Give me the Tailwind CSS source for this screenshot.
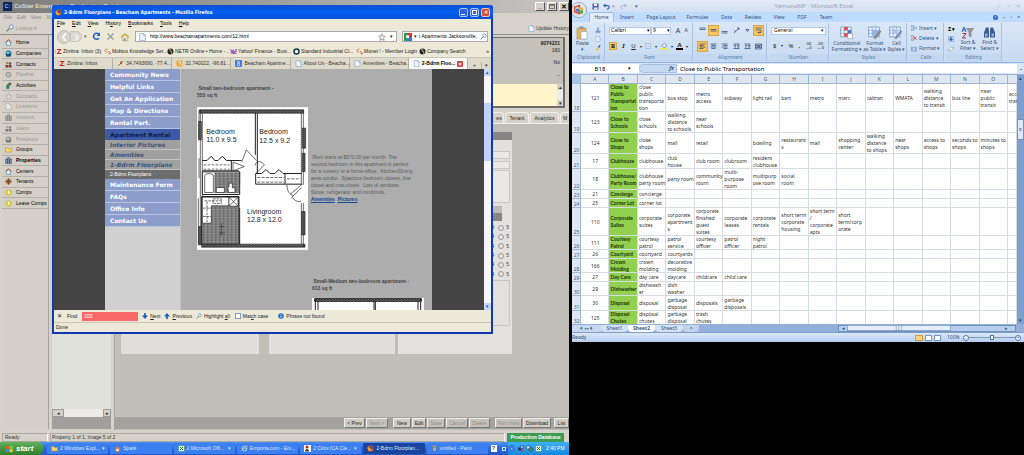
<!DOCTYPE html>
<html lang="en">
<head>
  <meta charset="UTF-8">
  <title>Desktop</title>
  <meta name="viewport" content="width=device-width, initial-scale=1.0">
  <script src="https://cdn.jsdelivr.net/npm/@tailwindcss/browser@4"></script>
</head>
<body class="bg-black font-['Liberation_Sans',sans-serif] text-[5px] leading-[7px] text-[#222]">

<!-- shared icons -->
<svg class="hidden">
  <symbol id="page" viewBox="0 0 12 14"><path d="M1 1h7l3 3v9H1z" fill="#eef5ff" stroke="#6f92c8"/><path d="M8 1v3h3" fill="none" stroke="#6f92c8"/></symbol>
  <symbol id="fox" viewBox="0 0 14 14"><circle cx="7" cy="7" r="6" fill="#e2631b"/><circle cx="8" cy="6" r="3.4" fill="#2b4f9e"/><path d="M1 5c2-1 3 0 4 1s3 1 4 3-4 4-6 2z" fill="#f7a52b"/></symbol>
  <symbol id="z" viewBox="0 0 14 14"><path d="M1 3v8" stroke="#bbb" stroke-width="2"/><path d="M4 2h9L7 10h6v2H3l6-8H4z" fill="#d8201c"/></symbol>
  <symbol id="swirl" viewBox="0 0 14 14"><path d="M7 3a3 3 0 1 0-1 5M8 6l5 6M9 11a2 2 0 1 0 4-2" fill="none" stroke="#e0562b" stroke-width="1.6"/></symbol>
  <symbol id="globe" viewBox="0 0 14 14"><circle cx="7" cy="7" r="6" fill="#222"/><path d="M4 3l4 1-1 3 3 1-1 4" stroke="#cfd68a" stroke-width="1.5" fill="none"/></symbol>
  <symbol id="tenant" viewBox="0 0 14 14"><circle cx="7" cy="7" r="6" fill="#d8892f"/><path d="M7 1v12M1 7h12" stroke="#5a2a1a" stroke-width="1.5"/><circle cx="7" cy="7" r="3" fill="#3a5aa0"/></symbol>
  <symbol id="yahoo" viewBox="0 0 14 14"><path d="M1 3l3 4v5M7 3L4 7" stroke="#7a1aa0" stroke-width="2" fill="none"/><circle cx="8" cy="9" r="2" fill="none" stroke="#7a1aa0" stroke-width="2"/><path d="M12 2v6M12 10v2" stroke="#7a1aa0" stroke-width="2"/></symbol>
  <symbol id="ring" viewBox="0 0 14 14"><circle cx="7" cy="7" r="5" fill="#fff" stroke="#16364a" stroke-width="3"/></symbol>
  <symbol id="map" viewBox="0 0 14 14"><path d="M1 1h12v12H1z" fill="#e6e0c4"/><path d="M2 12L12 2" stroke="#4a9a4a" stroke-width="2"/><path d="M8 2l3 3-3 5-2-5z" fill="#d33"/></symbol>
  <symbol id="orange" viewBox="0 0 14 14"><rect x="1" y="1" width="12" height="12" rx="2" fill="#f0a52c"/><path d="M4 4h5v5h2" fill="none" stroke="#fff" stroke-width="1.6"/></symbol>
  <symbol id="g8" viewBox="0 0 14 14"><rect width="14" height="14" rx="2" fill="#3b78e0"/><circle cx="7" cy="4.5" r="2" fill="none" stroke="#fff" stroke-width="1.5"/><circle cx="7" cy="9.5" r="2.5" fill="none" stroke="#fff" stroke-width="1.5"/></symbol>
  <symbol id="xl" viewBox="0 0 14 14"><rect x="1" y="1" width="12" height="12" rx="1" fill="#e4f3e4" stroke="#2b8a3e"/><path d="M4 4l6 6M10 4l-6 6" stroke="#1e7a33" stroke-width="2"/></symbol>
  <symbol id="folder" viewBox="0 0 14 14"><path d="M1 3h5l1 2h6v7H1z" fill="#f6d56a" stroke="#b98a20"/></symbol>
  <symbol id="flame" viewBox="0 0 14 14"><path d="M7 1c1 3 5 4 5 8a5 5 0 0 1-10 0c0-3 4-4 5-8z" fill="#e8742a"/><circle cx="7" cy="10" r="2.5" fill="#fff"/></symbol>
  <symbol id="ie" viewBox="0 0 14 14"><circle cx="7" cy="7" r="4.5" fill="none" stroke="#8fd4ff" stroke-width="2.4"/><path d="M3 7h8M1 12C3 6 8 2 13 2" stroke="#f3d45a" fill="none"/></symbol>
  <symbol id="citrix" viewBox="0 0 14 14"><rect width="14" height="14" fill="#fff"/><circle cx="6" cy="4" r="3" fill="#c22"/><path d="M2 13c0-7 8-7 8 0z" fill="#333"/></symbol>
  <symbol id="paint" viewBox="0 0 14 14"><path d="M3 5h8l-1 8H4z" fill="#9fb7c8" stroke="#456"/><path d="M5 5L4 1M7 5V1M9 5l2-4" stroke="#e2b23a" stroke-width="1.5"/></symbol>
  <symbol id="info" viewBox="0 0 14 14"><circle cx="7" cy="7" r="6.5" fill="#1d6fc4"/><path d="M7 3v2M7 6v5" stroke="#fff" stroke-width="2"/></symbol>
  <symbol id="lens" viewBox="0 0 14 14"><circle cx="9" cy="5" r="3.5" fill="#e6f1fb" stroke="#5b87b5" stroke-width="1.4"/><path d="M6 8l-5 5" stroke="#777" stroke-width="2"/></symbol>
  <symbol id="people" viewBox="0 0 14 14"><circle cx="4.500" cy="4" r="2.500" fill="#c4803a"/><circle cx="10" cy="5" r="2.500" fill="#3c5a9c"/><path d="M1 13V8h6v5zM8 13V8h5v5z" fill="#7a3a2a"/></symbol>
  <symbol id="house" viewBox="0 0 14 14"><path d="M1 7l6-6 6 6" fill="none" stroke="#c4622a" stroke-width="2"/><path d="M3 7v6h8V7L7 3z" fill="#dbe9f5" stroke="#2b6f98"/></symbol>
  <symbol id="ball" viewBox="0 0 14 14"><circle cx="7" cy="7" r="6" fill="#2c83a8"/><path d="M2 8h10v5H2z" fill="#1c5370"/><path d="M4 4h4v3H4z" fill="#a8dcec"/></symbol>
  <symbol id="gear" viewBox="0 0 14 14"><circle cx="7" cy="7" r="4.500" fill="#ddd" stroke="#777" stroke-width="2.500"/><circle cx="7" cy="7" r="1.500" fill="#777"/></symbol>
  <symbol id="arrowup" viewBox="0 0 14 14"><path d="M3 13V7l7-6 3 3-5 4v5z" fill="#2f8a66" stroke="#365"/><circle cx="10" cy="4" r="2" fill="#c33"/></symbol>
  <symbol id="star" viewBox="0 0 14 14"><path d="M7 1l2 4 4 .5-3 3 .8 4.500L7 11l-3.800 2L4 8.500l-3-3L5 5z" fill="#e4e4e4" stroke="#777"/></symbol>
  <symbol id="bld" viewBox="0 0 14 14"><path d="M1 4h4v9H1zM5 1h4v12H5zM9 4h4v9H9z" fill="#7e93a8" stroke="#3c4c60"/></symbol>
  <symbol id="coin" viewBox="0 0 14 14"><circle cx="7" cy="7" r="5.500" fill="#e8d83a" stroke="#b9a51c"/><path d="M7 3v5h3" stroke="#fff" stroke-width="2" fill="none"/></symbol>
  <symbol id="office" viewBox="0 0 40 40"><circle cx="20" cy="20" r="19" fill="#dfe7f1" stroke="#8d9db5" stroke-width="2"/><path d="M9 13l12-4v20l-12-4z" fill="none" stroke="#e0502a" stroke-width="4"/><path d="M20 14h10v6H20z" fill="#f3b52a"/><path d="M20 21h10v8H20z" fill="#5aa53c"/><path d="M12 17h8v7h-8z" fill="#3f7ad0"/></symbol>
  <symbol id="grid" viewBox="0 0 40 40"><path d="M2 3h30v28H2z" fill="#f6faff" stroke="#5d7fae" stroke-width="2"/><path d="M2 12h30M2 21h30M12 3v28M22 3v28" stroke="#7c9cc9" stroke-width="2"/></symbol>
</svg>

<main class="grid min-h-screen grid-cols-[569fr_452fr] gap-[3px]">

  <!-- left monitor -->
  <div class="relative flex min-w-0 flex-col overflow-hidden bg-[#d6d2ca]">
    <header class="flex h-[13px] items-center gap-[2px] bg-linear-to-r from-[#7d7d7d] to-[#c6c5c3] pl-[3px] text-[6px] font-bold text-[#dedad2]">
      <span class="flex h-[9px] w-[9px] items-center justify-center bg-[#10245c] text-[5px] text-[#7fb6ff]">C:</span>
      <h1 class="flex-1">CoStar Enterprise - Production Database</h1>
      <button class="h-[9px] w-[10px] border border-[#fff] border-r-[#555] border-b-[#555] bg-[#d6d2ca] leading-[5px] text-black" aria-label="Minimize">_</button>
      <button class="flex h-[9px] w-[10px] items-center justify-center border border-[#fff] border-r-[#555] border-b-[#555] bg-[#d6d2ca]" aria-label="Maximize"><span class="h-[5px] w-[6px] border border-t-2 border-[#777]"></span></button>
      <button class="h-[9px] w-[10px] border border-[#fff] border-r-[#555] border-b-[#555] bg-[#d6d2ca] text-[7px] leading-[6px] text-black" aria-label="Close">✕</button>
    </header>
    <nav class="flex h-[9px] items-center gap-[5px] pl-1 text-[#8f8c86]"><span>File</span><span>Edit</span><span>View</span><span>Modules</span></nav>
    <div class="flex h-[13px] items-center justify-between border-b border-[#8f8c86] pl-[6px] text-[#9a978f]">
      <button class="flex items-center gap-[2px]"><svg class="size-2"><use href="#lens"/></svg>Lookup ▾</button>
      <button class="flex items-center gap-px text-[#333]"><svg class="size-[7px]"><use href="#page"/></svg>Update History</button>
    </div>

    <div class="flex flex-1">
      <ul id="modules" class="mb-px ml-[2px] w-[47px] shrink-0 border-r border-[#a9a59d] bg-[#d4d0c8] pt-[3px]"></ul>
      <div class="ml-[3px] flex min-w-0 flex-1 flex-col">
        <div class="mt-[2px] mr-[4px] flex h-[71px] flex-col border-r-2 border-b-2 border-t border-[#6f6d69] bg-[#c4c1ba] text-right">
          <div class="flex-1 pt-[2px] pr-[3px]">
            <p class="font-bold">9074221</p>
            <p>160</p>
            <p class="mt-[5px]">No</p>
            <p class="mt-[6px]">--</p>
          </div>
          <div class="flex h-[22px] justify-end bg-[#fff6cc]">
            <div class="flex w-[6px] flex-col justify-between bg-[#eee] text-center leading-[6px]"><span class="bg-[#d4d0c8]">▴</span><span class="bg-[#d4d0c8]">▾</span></div>
          </div>
        </div>
        <div class="mt-[4px] flex h-[12px] justify-end gap-px overflow-hidden border-b border-[#efede9] text-[#222]">
          <button class="w-[20px] rounded-t border border-b-0 border-[#f3f1ed] pl-[10px]">es</button>
          <button class="w-[24px] rounded-t border border-b-0 border-[#f3f1ed]">Tenant</button>
          <button class="w-[29px] rounded-t border border-b-0 border-[#f3f1ed]">Analytics</button>
          <button class="w-[9px] rounded-tl border border-r-0 border-b-0 border-[#f3f1ed]">M</button>
        </div>
        <div class="flex flex-1">
          <div class="flex w-[59px] flex-col">
            <div class="flex-1 bg-[#e1e1dc]"></div>
            <div class="flex h-[8px] justify-between bg-[#ecebe8]"><button class="w-[12px] border border-[#999] bg-[#d4d0c8] leading-[6px]">◂</button><button class="w-[8px] border border-[#999] bg-[#d4d0c8] leading-[6px]">▸</button></div>
            <div class="mb-px h-[12px] bg-[#a09f9b]"></div>
          </div>
          <div class="ml-[3px] flex flex-1 flex-col border-l border-[#a5a29b] bg-[#c1beb7]">
            <div class="mt-2 mr-[57px] ml-[6px] flex h-[222px]">
              <div class="mr-[10px] flex-[138] bg-[#e0dfdc]"></div>
              <div class="mr-[3px] flex-[125] bg-[#e0dfdc]"></div>
              <form class="flex flex-[114] flex-col bg-[#e3e1de]">
                <div class="mb-[11px] h-[8px] bg-[#868686]"></div>
                <input aria-label="Contact" class="mx-[2px] mb-[2px] h-[8px] border border-[#c9c7c4] bg-[#e9e8e6]">
                <input aria-label="Phone" class="mx-[2px] mb-px h-[8px] border border-[#c9c7c4] bg-[#e9e8e6]">
                <textarea aria-label="Notes" class="mx-[2px] h-[33px] resize-none border border-[#c9c7c4] bg-[#e9e8e6]"></textarea>
                <div class="mt-[3px] mr-[10px] h-[7px] bg-[#bdbcba]"></div>
                <div class="mr-[10px] mb-[2px] h-[8px] bg-[#868686]"></div>
                <div id="ratings" class="flex h-[56px] flex-col justify-around pr-[3px] text-[#444]"></div>
                <textarea aria-label="Remarks" class="mx-[2px] mt-px h-[46px] resize-none border border-[#c9c7c4] bg-[#e3e1de]"></textarea>
              </form>
            </div>
            <div class="flex-1"></div>
            <div class="mb-px flex h-[12px] items-center justify-end gap-px bg-[#a3a29e] text-[#222]">
              <button class="h-[10px] w-[21px] border border-[#efede9] border-r-[#777] border-b-[#777] bg-[#d0cdc6]">&lt; Prev</button>
              <button class="mr-[4px] h-[10px] w-[22px] border border-[#efede9] border-r-[#777] border-b-[#777] bg-[#c4c1ba] text-[#8d8a84]">Next &gt;</button>
              <button class="h-[10px] w-[18px] border border-[#efede9] border-r-[#777] border-b-[#777] bg-[#d0cdc6]">New</button>
              <button class="h-[10px] w-[14px] border border-[#efede9] border-r-[#777] border-b-[#777] bg-[#d0cdc6]">Edit</button>
              <button class="h-[10px] w-[18px] border border-[#efede9] border-r-[#777] border-b-[#777] bg-[#c4c1ba] text-[#8d8a84]">Save</button>
              <button class="h-[10px] w-[22px] border border-[#efede9] border-r-[#777] border-b-[#777] bg-[#c4c1ba] text-[#8d8a84]">Cancel</button>
              <button class="mr-[4px] h-[10px] w-[21px] border border-[#efede9] border-r-[#777] border-b-[#777] bg-[#c4c1ba] text-[#8d8a84]">Delete</button>
              <button class="h-[10px] w-[27px] border border-[#efede9] border-r-[#777] border-b-[#777] bg-[#c4c1ba] text-[#8d8a84]">Film View</button>
              <button class="mr-[2px] h-[10px] w-[28px] border border-[#efede9] border-r-[#777] border-b-[#777] bg-[#d0cdc6]">Download</button>
              <button class="h-[10px] w-[15px] border border-[#efede9] border-r-[#777] border-b-[#777] bg-[#d0cdc6]">List</button>
            </div>
          </div>
        </div>
      </div>
    </div>

    <footer class="flex h-[12px] items-center gap-[2px] pt-[3px] pr-[5px] pl-[2px] text-[#333]">
      <span class="h-[9px] w-[46px] border border-[#aaa69e] border-r-white pl-[2px]">Ready</span>
      <span class="h-[9px] flex-1 border border-[#aaa69e] border-r-white pl-px">Property 1 of 1, Image 5 of 2</span>
      <span class="h-[9px] w-[57px] bg-[#3e9b52] text-center font-bold leading-[9px] text-white">Production Database</span>
    </footer>

    <!-- taskbar -->
    <nav class="flex h-[13px] items-center bg-linear-to-b from-[#4f93f5] via-[#2a66dd] to-[#2258c8] text-[#dfeaff]">
      <button class="mr-[4px] flex h-full w-[43px] items-center gap-[2px] rounded-r-[5px] bg-linear-to-b from-[#5fb35a] to-[#2f7d2e] pl-[5px] text-[8px] font-bold italic text-white">
        <svg class="h-2 w-[9px]" viewBox="0 0 18 16"><path d="M1 3l7-2v6l-7 1z" fill="#e8562a"/><path d="M9 1l8 1-1 6-7-1z" fill="#7cc63a"/><path d="M1 9l7-1-1 6-6 1z" fill="#4a86e8"/><path d="M9 8l7 1-1 6-6-1z" fill="#f3c32e"/></svg>start
      </button>
      <div id="tasks" class="flex min-w-0 flex-1 gap-[2px]"></div>
      <div class="flex h-full w-[20px] items-center justify-center gap-[5px]"><span class="h-[7px] w-[6px] bg-white text-center font-bold text-[#222]">?</span><span class="h-[4px] w-[4px] border border-[#cfe2ff]"></span></div>
      <div class="flex h-full w-[61px] items-center gap-[2px] bg-linear-to-b from-[#3cb0f5] to-[#1488dd] text-white">
        <span class="flex size-[7px] items-center justify-center rounded-full bg-[#3b78d8] leading-[5px]">‹</span>
        <svg class="size-[7px]" viewBox="0 0 14 14"><path d="M2 5h7v6H2z" fill="#223a7a"/><path d="M7 1h6v6H7z" fill="#8fb5ee" stroke="#223a7a"/><path d="M8 9h4v4H8z" fill="#d33"/></svg>
        <svg class="size-[7px]" viewBox="0 0 14 14"><path d="M1 2h7v6H1z" fill="#d5e6ff" stroke="#234"/><path d="M6 6h7v6H6z" fill="#3aa45a" stroke="#234"/></svg>
        <svg class="size-[7px]"><use href="#xl"/></svg>
        <time class="ml-[2px]">2:40 PM</time>
      </div>
    </nav>

    <!-- browser window -->
    <section class="absolute top-[5px] right-[76px] left-[52px] flex flex-col rounded-t-[3px] border-2 border-t-0 border-[#1238b0] bg-[#ece9d8]">
      <header class="-mx-[2px] flex h-[14px] items-center gap-[2px] rounded-t-[3px] bg-linear-to-b from-[#0a50d8] via-[#0560f0] to-[#0450dc] pr-[3px] pl-[3px] text-white">
        <svg class="size-[7px]"><use href="#fox"/></svg>
        <h2 class="flex-1 font-['DejaVu_Sans_Condensed','DejaVu_Sans',sans-serif] text-[5px] font-bold">2-Bdrm Floorplans - Beacham Apartments - Mozilla Firefox</h2>
        <button aria-label="Minimize" class="flex size-[9px] items-end rounded-[2px] border border-[#a9c4f7] bg-[#2d64dd] p-px"><span class="h-px w-[4px] bg-white"></span></button>
        <button aria-label="Maximize" class="size-[9px] rounded-[2px] border border-[#a9c4f7] bg-[#2d64dd] p-px"><span class="block h-[5px] w-[5px] border border-white"></span></button>
        <button aria-label="Close" class="size-[9px] rounded-[2px] border border-[#f2c0b0] bg-[#d9502e] font-bold leading-[6px]">✕</button>
      </header>
      <nav class="flex h-[9px] items-center gap-[7px] pl-[3px] text-black">
        <span><u>F</u>ile</span><span><u>E</u>dit</span><span><u>V</u>iew</span><span>Hi<u>s</u>tory</span><span><u>B</u>ookmarks</span><span><u>T</u>ools</span><span><u>H</u>elp</span>
      </nav>
      <div class="flex h-[17px] items-center gap-[5px] px-[3px]">
        <div class="flex items-center">
          <button aria-label="Back" class="size-[14px] rounded-full border border-[#bbb] bg-[#d5d3cc] text-[8px] leading-[10px] text-white">❮</button>
          <button aria-label="Forward" class="-ml-px h-[11px] w-[12px] rounded-r-full border border-[#c5c2b8] bg-[#dcdad2] text-[6px] leading-[8px] text-white">❯</button>
          <span class="pl-[2px] text-[#666]">▾</span>
        </div>
        <button aria-label="Reload"><svg class="size-[9px]" viewBox="0 0 18 18"><path d="M14 12a6 6 0 1 1 0-7" fill="none" stroke="#1d5fc0" stroke-width="3"/><path d="M16 1v7H9z" fill="#1d5fc0"/></svg></button>
        <button aria-label="Stop"><svg class="size-[9px]" viewBox="0 0 18 18"><path d="M3 3l12 12M15 3L3 15" stroke="#999" stroke-width="2.500"/></svg></button>
        <button aria-label="Home"><svg class="size-[10px]" viewBox="0 0 18 18"><path d="M2 9l7-6 7 6" fill="none" stroke="#c9a53c" stroke-width="2"/><path d="M4 9v7h10V9L9 5z" fill="#f6e9b8" stroke="#a98a38"/><path d="M7 11h3v5H7z" fill="#6f8fc0"/></svg></button>
        <div class="flex h-[11px] flex-1 items-center gap-[4px] border border-[#aaa] bg-white px-[3px]">
          <svg class="h-[8px] w-[7px]"><use href="#page"/></svg>
          <input aria-label="Address" value="http://www.beachamapartments.com/12.html" class="min-w-0 flex-1 text-black outline-none">
          <svg class="size-2"><use href="#star"/></svg><span>▾</span>
        </div>
        <div class="flex h-[11px] w-[86px] items-center gap-[2px] border border-[#aaa] bg-white pl-px">
          <svg class="size-2" viewBox="0 0 14 14"><path d="M0 0h7v14H0z" fill="#2c9a4a"/><path d="M7 0h7v7H7z" fill="#d8342c"/><path d="M7 7h7v7H7z" fill="#3a6fd8"/><path d="M4 4h5v5H4z" fill="#fff"/></svg>
          <span>▾</span>
          <input aria-label="Search" value="ı Apartments Jacksonville, N" class="min-w-0 flex-1 text-black outline-none">
          <svg class="size-[7px] shrink-0"><use href="#lens"/></svg>
        </div>
      </div>
      <div id="bookmarks" class="flex h-[12px] items-center pl-px text-[#222]"></div>
      <div id="tabs" class="flex h-[12px] items-end border-t border-[#c9c5b4] bg-[#dedacb] text-[#333]"></div>

      <div class="flex h-[241px] overflow-hidden bg-[#444]">
        <div class="flex min-w-0 flex-1 pl-[51px]">
          <nav class="w-[75px] shrink-0 bg-[#d0d0d0] font-['DejaVu_Sans',sans-serif] text-[6px] font-bold text-white">
            <ul id="sitenav"></ul>
          </nav>
          <article class="mr-[52px] flex min-w-0 flex-1 flex-col border-l border-[#c4c4c4] bg-[#adadad] pl-[16px]">
            <h3 class="mt-[16px] font-bold text-[#444]">&nbsp;Small two-bedroom apartment -<br>553 sq ft</h3>
            <div class="mt-[8px] flex items-center">
              <svg class="h-[143px] w-[111px] shrink-0" viewBox="52 97 333 428" fill="none" stroke="#222" stroke-width="2">
                <defs>
                  <pattern id="brick" width="12" height="8" patternUnits="userSpaceOnUse"><rect width="12" height="8" fill="#c4c4c4"/><path d="M0 0h12M0 4h12M3 0v4M9 4v4" stroke="#777" stroke-width="1.500"/></pattern>
                  <pattern id="noise" width="9" height="6" patternUnits="userSpaceOnUse"><rect width="9" height="6" fill="#444"/><path d="M1 1h4M6 4h3" stroke="#bbb"/></pattern>
                </defs>
                <rect x="52" y="97" width="333" height="428" fill="#fff" stroke="none"/>
                <path d="M60 105h312v10H60zM66 508h310v9H66z" fill="url(#noise)"/>
                <path d="M58 105v90M62 105v405M68 115v393M58 250v60M56 370v140M365 115v215M371 105v225M365 385v123M371 385v130" />
                <path d="M57 140h8v55h-8zM57 455h8v55h-8zM368 160h10v60h-10zM368 235h8v55h-8zM366 410h10v70h-10z" fill="url(#noise)"/>
                <path d="M227 115v125M233 115v180" stroke-width="3"/>
                <path d="M68 257h14l13-13 10 13h10l13-13 12 13h45M68 288h110M155 257v31" stroke-width="3"/>
                <path d="M72 270h78M72 283h78" stroke-dasharray="8 4"/>
                <path d="M160 262l34 13-34 13zM186 262l14-37 30 32M180 290v40M254 270c-8-12-24-14-28 2M230 295l24-25"/>
                <path d="M228 296h18l13-12 12 12h14l13-12 12 12h56M228 328h138M228 296v32M316 296v32" stroke-width="3"/>
                <path d="M233 308h80M233 322h80M322 312h40" stroke-dasharray="9 4"/>
                <path d="M332 358l36-30M322 330c0 20 8 30 20 32M336 368l30-30M338 365c4 12 14 16 26 15" />
                <path d="M68 291h112v68H68z" fill="#fff" stroke-width="3"/>
                <rect x="104" y="293" width="74" height="62" fill="url(#brick)" stroke="none"/>
                <path d="M75 303c0-9 26-9 26 0v50H75z" fill="#fff"/>
                <path d="M110 338h24v15h-24z" fill="#fff"/>
                <path d="M148 325h10v14h8v14h-20v-8c-3-4-2-8 2-9z" fill="#fff"/>
                <path d="M66 365h112v143H66z" fill="url(#brick)" stroke-width="3"/>
                <path d="M68 367h80v26H95v52H68z" fill="#fff"/>
                <path d="M148 367h27v27h-27zM148 367l27 27M175 367l-27 27" fill="#fff"/>
                <path d="M75 378h50M82 380v62M100 372h25v14h-25zM70 400h24M70 425h24" stroke-dasharray="8 3"/>
                <path d="M180 400v108" stroke-width="3"/>
                <path d="M120 455h14M118 475h18M125 445v38" stroke="#333"/>
                <g fill="#222" stroke="none" class="text-[21px]">
                  <text x="80" y="178">Bedroom</text><text x="80" y="203">11.0 x 9.5</text>
                  <text x="239" y="178">Bedroom</text><text x="239" y="204">12.5 x 9.2</text>
                  <text x="202" y="418">Livingroom</text><text x="202" y="443">12.8 x 12.0</text>
                </g>
              </svg>
              <p class="pl-[3px] whitespace-nowrap text-[#5c5c5c]">&nbsp;Rent starts at $570.00 per month. The<br>second bedroom in this apartment is perfect<br>for a nursery or a home office.&nbsp; Kitchen/Dining<br>area combo.&nbsp; Spacious bedroom closets, line<br>closet and coat closet.&nbsp; Lots of windows.<br>Stove, refrigerator and miniblinds.<br><a href="#" class="font-bold text-[#164a8e] underline">Amenities</a>&nbsp; <a href="#" class="font-bold text-[#164a8e] underline">Pictures</a></p>
            </div>
            <h3 class="mt-[28px] pl-[115px] font-bold text-[#444]">&nbsp;Small-Medium two-bedroom apartment -<br>613 sq ft</h3>
            <svg class="mt-[6px] ml-[115px] h-[20px] w-[112px] shrink-0" viewBox="0 0 336 60" fill="none" stroke="#222" stroke-width="3">
              <path d="M0 0h336v60H0z" fill="#fff" stroke="none"/><path d="M8 2h320v8H8z" fill="url(#noise)"/><path d="M10 2v58M18 10v50M186 10v50M190 10v50M318 10v50M326 2v58"/>
            </svg>
          </article>
        </div>
        <div class="flex w-[7px] flex-col bg-[#f6f5fb] text-center text-[#33509a]">
          <span class="h-[7px] bg-[#c6d6fb]">▴</span><span class="mt-[27px] h-[58px] rounded-[1px] bg-[#c2d1fb]"></span><span class="mt-auto h-[7px] bg-[#c6d6fb]">▾</span>
        </div>
      </div>

      <form class="flex h-[13px] items-center border-b border-[#cbc7b5] pl-[3px] text-[#222]">
        <button type="button" aria-label="Close find bar" class="mr-[5px] text-[6px]">✕</button>
        <label for="find" class="mr-[4px]">Find:</label>
        <input id="find" value="205" class="mr-[4px] h-[9px] w-[56px] bg-[#f86a6a] pl-[2px] text-white">
        <button type="button" class="mr-[4px] flex items-center gap-[2px]"><svg class="size-[6px]" viewBox="0 0 14 14"><path d="M5 0h4v6h5l-7 8-7-8h5z" fill="#1d5fc0"/></svg><span><u>N</u>ext</span></button>
        <button type="button" class="mr-[4px] flex items-center gap-[2px]"><svg class="size-[6px]" viewBox="0 0 14 14"><path d="M5 14h4V8h5L7 0 0 8h5z" fill="#1d5fc0"/></svg><span><u>P</u>revious</span></button>
        <button type="button" class="mr-[5px] flex items-center gap-[2px]"><svg class="size-[6px]"><use href="#lens"/></svg><span>Highlight <u>a</u>ll</span></button>
        <input id="case" type="checkbox" class="mr-[2px] size-[6px] appearance-none border border-[#7f9dc4] bg-white"><label for="case" class="mr-[10px]">Mat<u>c</u>h case</label>
        <svg class="mr-[2px] size-[6px]"><use href="#info"/></svg><output>Phrase not found</output>
      </form>
      <footer class="flex h-[9px] items-center pl-[2px]">Done</footer>
    </section>
  </div>

  <!-- right monitor -->
  <div class="flex min-w-0 flex-col self-start overflow-hidden bg-[#cfe0f5] font-['Noto_Sans',sans-serif] text-[#34527e]">
    <header class="flex h-[12px] items-center bg-linear-to-b from-[#e3ebf6] to-[#d3e0f2] text-[#9aa5b5]">
      <div class="relative w-[20px] self-start"><svg class="absolute top-[2px] -left-px z-10 size-[16px]"><use href="#office"/></svg></div>
      <svg class="mr-[4px] size-[7px]" viewBox="0 0 14 14"><path d="M1 1h12v12H1z" fill="#4a5fb0"/><path d="M4 1h6v5H4zM4 9h7v4H4z" fill="#e9eefb"/></svg>
      <svg class="size-[7px]" viewBox="0 0 14 14"><path d="M2 5h7c5 0 4 7-1 7" fill="none" stroke="#3a62b8" stroke-width="2.500"/><path d="M0 5l5-4v8z" fill="#3a62b8"/></svg><span class="mx-[2px]">▾</span>
      <svg class="ml-[3px] size-[7px] opacity-50" viewBox="0 0 14 14"><path d="M12 5H5c-5 0-4 7 1 7" fill="none" stroke="#7a8cab" stroke-width="2"/><path d="M14 5l-5-4v8z" fill="#7a8cab"/></svg><span class="ml-[8px] text-[#456]">▾</span>
      <h2 class="flex-1 pl-[50px] text-center text-[6px]">YamunaMF - Microsoft Excel</h2>
      <div class="flex w-[84px] justify-end gap-[7px] pr-[4px] text-[6px]"><span>–</span><span>▫</span><span>×</span></div>
    </header>
    <nav class="flex h-[10px] items-center bg-[#bfdbff] pl-[17px]">
      <div id="ribbontabs" class="flex h-full flex-1"></div>
      <span class="mr-[5px] flex size-[5px] items-center justify-center rounded-full bg-[#2c5fc4] text-[4px] text-white">?</span><span class="mr-[5px]">–</span><span class="mr-[5px]">▫</span><span class="mr-[4px]">×</span>
    </nav>

    <div class="flex h-[41px] gap-[2px] border-b border-[#8db2e3] bg-linear-to-b from-[#dbe7f6] to-[#c7daf1] pt-px pb-px pl-px">
      <section class="flex w-[32px] flex-col border-r border-[#a9c3e4]">
        <div class="flex flex-1 items-center justify-around">
          <button class="flex flex-col items-center leading-[6px]"><svg class="h-[14px] w-[12px]" viewBox="0 0 24 28"><path d="M2 4h18v22H2z" fill="#e6b45c" stroke="#a97c2c"/><path d="M7 1h8v5H7z" fill="#8a93a5"/><path d="M10 11h12v15H10z" fill="#fff" stroke="#7a93bb"/></svg>Paste<span>▾</span></button>
          <div class="flex flex-col gap-[3px]">
            <svg class="size-[6px]" viewBox="0 0 14 14"><path d="M5 1l4 8M9 1L5 9" stroke="#5a7ab5" stroke-width="1.500"/><circle cx="4" cy="11" r="2" fill="none" stroke="#3557a5" stroke-width="1.500"/><circle cx="10" cy="11" r="2" fill="none" stroke="#3557a5" stroke-width="1.500"/></svg>
            <svg class="size-[6px]"><use href="#page"/></svg>
            <svg class="size-[6px]" viewBox="0 0 14 14"><path d="M1 12l6-7 3 3-5 5z" fill="#f0c23a"/><path d="M8 6l4-5" stroke="#446" stroke-width="3"/></svg>
          </div>
        </div>
        <h3 class="bg-[#c1d8f0] text-center text-[#5b7ba8]">Clipboard</h3>
      </section>
      <section class="flex w-[86px] flex-col border-r border-[#a9c3e4]">
        <div class="flex flex-1 flex-col justify-around px-[2px]">
          <div class="flex items-center text-black">
            <div class="flex h-[8px] w-[42px] items-center border border-[#b3c9e6] bg-white"><select aria-label="Font" class="min-w-0 flex-1 appearance-none pl-px"><option>Calibri</option></select><span>▾</span></div>
            <div class="flex h-[8px] w-[20px] items-center border border-[#b3c9e6] bg-white"><select aria-label="Font size" class="min-w-0 flex-1 appearance-none pl-px"><option>9</option></select><span>▾</span></div>
            <button class="ml-[3px] w-[8px] text-[7px] text-[#223a6a]" aria-label="Grow font">A</button><button class="w-[8px] text-[#223a6a]" aria-label="Shrink font">A</button>
          </div>
          <div class="flex items-center gap-[3px] text-[6px] text-[#222]">
            <button class="h-[8px] w-[8px] border border-[#d6a64c] bg-[#fbc45c] font-bold leading-[6px]">B</button><button class="w-[7px] font-bold italic">I</button><button class="w-[7px] underline">U</button><span class="text-[4px]">▾</span>
            <svg class="size-[7px]"><use href="#grid"/></svg><span class="text-[4px]">▾</span>
            <svg class="size-[8px]" viewBox="0 0 14 14"><path d="M3 6l5-4 4 5-5 3z" fill="#e6edf8" stroke="#567"/><path d="M1 11h12v3H1z" fill="#f4ea2e"/></svg><span class="text-[4px]">▾</span>
            <button class="h-[8px] w-[7px] border-b-2 border-black font-bold leading-[6px]" aria-label="Font color">A</button><span class="text-[4px]">▾</span>
          </div>
        </div>
        <h3 class="bg-[#c1d8f0] text-center text-[#5b7ba8]">Font</h3>
      </section>
      <section class="flex w-[72px] flex-col border-r border-[#a9c3e4]">
        <div id="align" class="grid flex-1 grid-cols-6 items-center justify-items-center px-[2px]"></div>
        <h3 class="bg-[#c1d8f0] text-center text-[#5b7ba8]">Alignment</h3>
      </section>
      <section class="flex w-[60px] flex-col border-r border-[#a9c3e4]">
        <div class="flex flex-1 flex-col justify-around px-[2px] text-[#222]">
          <div class="flex h-[8px] items-center border border-[#b3c9e6] bg-white pr-px"><select aria-label="Number format" class="min-w-0 flex-1 appearance-none pl-[2px]"><option>General</option></select><span>▾</span></div>
          <div class="flex justify-between px-[2px] text-[6px]"><button>$</button><span class="text-[4px]">▾</span><button>%</button><button class="font-bold">,</button><button class="text-[4px] leading-[4px]">.00<br>→0</button><button class="text-[4px] leading-[4px]">.00<br>→.0</button></div>
        </div>
        <h3 class="bg-[#c1d8f0] text-center text-[#5b7ba8]">Number</h3>
      </section>
      <section class="flex w-[76px] flex-col border-r border-[#a9c3e4]">
        <div class="flex flex-1 items-center justify-around text-center leading-[6px]">
          <button class="flex flex-col items-center"><svg class="size-[14px]" viewBox="0 0 40 40"><use href="#grid" width="40" height="40"/><path d="M12 3h10v9H12zM12 21h10v10H12z" fill="#d9464a"/><path d="M22 12h10v9H22z" fill="#4a76c9"/><path d="M22 22h14v14H22z" fill="#fff" stroke="#555"/></svg>Conditional<br>Formatting ▾</button>
          <button class="flex flex-col items-center"><svg class="size-[14px]" viewBox="0 0 40 40"><use href="#grid" width="40" height="40"/><path d="M12 12h20v19H12z" fill="#8fb3e6"/><path d="M18 36l18-22" stroke="#8a8578" stroke-width="6"/></svg>Format<br>as Table ▾</button>
          <button class="flex flex-col items-center"><svg class="size-[14px]" viewBox="0 0 40 40"><use href="#grid" width="40" height="40"/><path d="M8 9h18v14H8z" fill="#a9c6f0"/><path d="M18 36l18-22" stroke="#7d8aa0" stroke-width="6"/></svg>Cell<br>Styles ▾</button>
        </div>
        <h3 class="bg-[#c1d8f0] text-center text-[#5b7ba8]">Styles</h3>
      </section>
      <section class="flex w-[35px] flex-col border-r border-[#a9c3e4]">
        <div class="flex flex-1 flex-col items-start justify-around pl-[2px]">
          <button class="flex items-center gap-[2px]"><svg class="size-[6px]" viewBox="0 0 14 14"><path d="M1 1h5v4H1zM1 9h5v4H1zM7 5h6v4H7z" fill="#dbe8fb" stroke="#4a6aa0"/></svg>Insert ▾</button>
          <button class="flex items-center gap-[2px]"><svg class="size-[6px]" viewBox="0 0 14 14"><path d="M1 1h5v4H1zM1 9h5v4H1z" fill="#dbe8fb" stroke="#4a6aa0"/><path d="M6 4l7 7M13 4l-7 7" stroke="#d33" stroke-width="2"/></svg>Delete ▾</button>
          <button class="flex items-center gap-[2px]"><svg class="size-[6px]" viewBox="0 0 14 14"><path d="M3 3h8v9H3zM1 1v12M13 1v12M7 3v9" fill="#dbe8fb" stroke="#4a6aa0"/></svg>Format ▾</button>
        </div>
        <h3 class="bg-[#c1d8f0] text-center text-[#5b7ba8]">Cells</h3>
      </section>
      <section class="flex w-[56px] flex-col border-r border-[#a9c3e4]">
        <div class="flex flex-1 items-center justify-around text-center leading-[6px]">
          <div class="flex flex-col gap-[4px]"><span class="font-bold text-black">Σ ▾</span><svg class="size-[6px]" viewBox="0 0 14 14"><path d="M1 1h12v12H1z" fill="#d3e3fa" stroke="#47a"/><path d="M5 3h4v4h3l-5 5-5-5h3z" fill="#2c5fc4"/></svg><svg class="size-[6px]" viewBox="0 0 14 14"><path d="M1 10l6-7h6l-6 8H1z" fill="#fff" stroke="#678"/></svg></div>
          <button class="flex flex-col items-center"><svg class="size-[13px]" viewBox="0 0 26 26"><path d="M2 12L6 2l4 10M3 8h6" fill="none" stroke="#2c5fc4" stroke-width="2"/><path d="M3 15h7l-7 9h7" fill="none" stroke="#a33" stroke-width="2"/><path d="M11 5h14l-5 7v10l-4-3v-7z" fill="#999" stroke="#666"/></svg>Sort &amp;<br>Filter ▾</button>
          <button class="flex flex-col items-center"><svg class="size-[13px]" viewBox="0 0 26 26"><path d="M6 3h5l1 8v12H2V13zM15 3h5l4 10v10H14V11z" fill="#3c5c92"/><path d="M4 15h5v6H4zM17 15h5v6h-5z" fill="#8fb0de"/></svg>Find &amp;<br>Select ▾</button>
        </div>
        <h3 class="bg-[#c1d8f0] text-center text-[#5b7ba8]">Editing</h3>
      </section>
    </div>

    <div class="flex h-[12px] items-center border-b border-[#9ab4d6] bg-[#d6e4f5] text-[6px] text-black">
      <input aria-label="Name box" value="B18" class="h-[9px] w-[56px] bg-white text-center"><span class="w-[11px] bg-white text-[5px] leading-[9px]">▾</span>
      <span class="w-[38px] rounded-l-full border border-[#a8c1e2] bg-[#c5d9f1] pr-[2px] text-right leading-[7px] italic">fx</span>
      <input aria-label="Formula" value="Close to Public Transportation" class="h-[9px] min-w-0 flex-1 bg-white pl-[3px]">
      <span class="w-[7px] text-center text-[5px]">⌄</span>
    </div>

    <div class="flex h-[249px]">
      <div class="min-w-0 flex-1 overflow-hidden bg-white">
        <table class="w-full table-fixed border-separate border-spacing-0 text-[#333]">
          <thead id="cols" class="bg-[#dde6f1] text-[#4c6283]"></thead>
          <tbody id="rows"></tbody>
        </table>
      </div>
      <div class="flex w-[7px] flex-col bg-[#7f9fce] text-center text-[#23406e]"><span class="h-[7px]">▴</span><span class="mt-[37px] h-[21px] border border-[#7590b8] bg-[#dce8f7] leading-[19px]">≡</span><span class="mt-auto">▾</span></div>
    </div>

    <div class="flex h-[8px] items-center bg-[#93b0da] text-[#35507c]">
      <span class="w-[29px] bg-[#c5d8f0] text-center">⏴ ◂ ▸ ⏵</span>
      <button class="w-[27px] rounded-b bg-[#d3e2f5]">Sheet1</button><button class="w-[27px] rounded-b bg-white font-bold">Sheet2</button><button class="w-[28px] rounded-b bg-[#d3e2f5]">Sheet3</button><button class="w-[16px] rounded-b bg-[#c0d4ee]" aria-label="Insert sheet">✧</button>
      <div class="ml-auto flex h-[7px] w-[178px] items-center border border-[#6f8fbd] bg-[#b7cdeb]"><span class="w-[8px] text-center">◂</span><span class="w-[104px] border border-[#8fa9cf] bg-[#e4edf9] text-center leading-[4px]">|||</span><span class="ml-auto w-[10px]">▸</span></div>
      <span class="w-[8px]"></span>
    </div>
    <footer class="flex h-[10px] items-center border-t border-[#7e9cc8] bg-linear-to-b from-[#dbe8f8] to-[#b5cdec]">
      <span class="flex-1">Ready</span>
      <span class="flex gap-[2px] pr-[6px]"><i class="h-[6px] w-[8px] border border-[#d29b3e] bg-[#fbd284]"></i><i class="h-[6px] w-[7px] border border-[#7a97c3] bg-white"></i><i class="h-[6px] w-[7px] border border-[#7a97c3] bg-white"></i></span>
      <span class="w-[16px]">100%</span>
      <button aria-label="Zoom out" class="size-[6px] rounded-full border border-[#56749f] bg-white leading-[4px]">−</button>
      <input aria-label="Zoom" type="range" class="h-px w-[46px] appearance-none bg-[#7f9ac2] [&::-webkit-slider-thumb]:h-[5px] [&::-webkit-slider-thumb]:w-[4px] [&::-webkit-slider-thumb]:appearance-none [&::-webkit-slider-thumb]:border [&::-webkit-slider-thumb]:border-[#56749f] [&::-webkit-slider-thumb]:bg-white">
      <button aria-label="Zoom in" class="mr-[3px] size-[6px] rounded-full border border-[#56749f] bg-white leading-[4px]">+</button>
    </footer>
  </div>
</main>

<script>
const icon = (id, cls) => `<svg class="${cls}"><use href="#${id}"/></svg>`;

// CoStar modules: label, icon, state
const modules = [
  ["Home", "house", "on"], ["Companies", "ball", "on"], ["Contacts", "people", "on"], ["Pipeline", "gear", "off"],
  ["Activities", "arrowup", "on"], ["Contracts", "star", "off"], ["Lineitems", "page", "off"], ["Invoices", "bld", "off"],
  ["Users", "people", "off"], ["Prospects", "ball", "off"], ["Groups", "folder", "on"], ["Properties", "bld", "sel"],
  ["Centers", "house", "on"], ["Tenants", "tenant", "on"], ["Comps", "coin", "on"], ["Lease Comps", "coin", "on"]
];
const moduleClass = { on: "text-black", off: "text-[#9a978f]", sel: "text-black font-bold" };
const list = document.getElementById("modules");
list.innerHTML = `<li class="grid h-[171px] auto-rows-fr">` + modules.map(([t, i, s]) =>
  `<button class="flex items-center gap-[4px] border-b border-[#b5b1a9] pl-[3px] ${moduleClass[s]}">${icon(i, s === "off" ? "size-[7px] grayscale opacity-60" : "size-[7px]")}${t}</button>`).join("") + `</li>`;

document.getElementById("ratings").innerHTML = [1, 2, 3, 4, 5, 6].map(n =>
  `<div class="flex items-center justify-end gap-[2px]"><span class="pr-[2px]">4</span><input id="r${n}" type="radio" name="r${n}" class="size-[6px] appearance-none rounded-full border border-[#999]"><label for="r${n}">5</label></div>`).join("");

const tasks = [["folder", "2 Windows Expl...", 1], ["flame", "Spark", 0], ["xl", "2 Microsoft Offi...", 1], ["ie", "Emporia.com - Em...", 0],
  ["citrix", "2 Citrix ICA Cle...", 1], ["fox", "2-Bdrm Floorplan...", 0], ["paint", "untitled - Paint", 0]];
document.getElementById("tasks").innerHTML = tasks.map(([i, t, more]) =>
  `<button class="flex h-[11px] min-w-0 flex-1 items-center gap-[2px] rounded-[1px] px-[4px] whitespace-nowrap ${i === "fox" ? "bg-[#1a459f]" : "bg-[#3b7ff0]"}">${icon(i, "size-[7px] shrink-0")}<span class="flex-1 text-left">${t}</span>${more ? "<span>▾</span>" : ""}</button>`).join("");

const bookmarks = [["z", "Zimbra: Inbox (3)"], ["swirl", "Mobius Knowledge Ser..."], ["globe", "NETR Online • Home - ..."], ["yahoo", "Yahoo! Finance - Busi..."],
  ["ring", "Standard Industrial Cl..."], ["swirl", "Monet ! - Member Login"], ["globe", "Company Search"]];
document.getElementById("bookmarks").innerHTML = bookmarks.map(([i, t], n) =>
  `<a href="#" class="flex items-center gap-px whitespace-nowrap ${n === 0 ? "w-[49px]" : "w-[63px]"}">${icon(i, "size-[7px] shrink-0")}${t}</a>`).join("") + `<span class="ml-auto pr-[2px]">»</span>`;

const tabs = [["z", "Zimbra: Inbox"], ["map", "34.7493690, -77.4..."], ["orange", "32.740022, -96.81..."], ["g8", "Beacham Apartme..."],
  ["page", "About Us - Beacha..."], ["page", "Amenities - Beacha..."], ["page", "2-Bdrm Floo..."]];
document.getElementById("tabs").innerHTML = tabs.map(([i, t], n) =>
  `<button class="flex h-[11px] min-w-0 flex-1 items-center gap-[2px] border-r border-[#b5b19f] pl-[4px] whitespace-nowrap ${n === 6 ? "bg-[#fbfaf5] font-bold text-black" : ""}">${icon(i, "size-[7px] shrink-0")}${t}${n === 6 ? '<span class="size-[6px] rounded-[1px] bg-[#cf3b3b] leading-[6px] text-white">✕</span>' : ""}</button>`).join("") +
  `<button class="w-[14px] border-r border-[#b5b19f]" aria-label="New tab">+</button><button class="w-[9px]" aria-label="List tabs">▾</button>`;

// site navigation
const top2 = "h-[12px] border-b border-[#b9c4e2] bg-[#8c9ccb] leading-[11px]";
const sub = "h-[10px] border-b border-[#c4c4c4] bg-[#a0a0a0] leading-[10px] italic text-[#3f547c]";
const siteNav = [["Community News", top2], ["Helpful Links", top2], ["Get An Application", top2], ["Map & Directions", top2], ["Rental Part.", top2],
  ["Apartment Rental", "h-[11px] bg-[#3c5aa6] leading-[11px] text-[#101c40]"],
  ["Interior Pictures", sub], ["Amenities", sub], ["1-Bdrm Floorplans", sub],
  ["2-Bdrm Floorplans", "h-[9px] bg-[#6d6d6d] text-[5px] leading-[9px] font-normal font-['Liberation_Sans']"],
  ["Maintenance Form", top2], ["FAQs", top2], ["Office Info", top2], ["Contact Us", top2]];
document.getElementById("sitenav").innerHTML = siteNav.map(([t, c]) =>
  `<li class="overflow-hidden pl-[5px] whitespace-nowrap ${c}"><a href="#">${t}</a></li>`).join("");

document.getElementById("ribbontabs").innerHTML = [["Home", "w-[25px]"], ["Insert", "w-[26px]"], ["Page Layout", "w-[42px]"], ["Formulas", "w-[31px]"],
  ["Data", "w-[27px]"], ["Review", "w-[26px]"], ["View", "w-[26px]"], ["PDF", "w-[20px]"], ["Team", "w-[28px]"]].map(([t, w], n) =>
  `<button class="${w} ${n === 0 ? "rounded-t-[2px] border border-b-0 border-[#9dbde6] bg-[#e3edf9]" : ""}">${t}</button>`).join("");

// alignment buttons: name, drawing, highlighted
const aligns = [
  ["Top align", "M1 2h12M1 5h12", 0], ["Middle align", "M1 5h12M1 8h12", 1], ["Bottom align", "M1 9h12M1 12h12", 0],
  ["Orientation", "M2 12L12 2M8 2h4v4M2 6l4 4", 0], ["", "M4 5h6l-3 4z", 0], ["Wrap text", "M1 2h12M1 6h11v5H6M8 9l-2 2 2 2", 1],
  ["Align left", "M1 2h12M1 5h8M1 8h12M1 11h8", 1], ["Center", "M1 2h12M3 5h8M1 8h12M3 11h8", 0], ["Align right", "M1 2h12M5 5h8M1 8h12M5 11h8", 0],
  ["Decrease indent", "M1 2h12M8 5h5M8 8h5M1 11h12M6 4L2 6l4 3", 0], ["Increase indent", "M1 2h12M8 5h5M8 8h5M1 11h12M2 4l4 2-4 3", 0], ["Merge", "M1 2h12v10H1zM1 5h12M1 9h12M4 7h6", 0]
];
document.getElementById("align").innerHTML = aligns.map(([name, d, on]) =>
  `<button aria-label="${name || "More"}" class="p-px ${on ? "border border-[#d6a64c] bg-[#fbc45c]" : ""}"><svg class="size-[7px]" viewBox="0 0 14 14"><path d="${d}" fill="none" stroke="#334a78" stroke-width="1.500"/></svg></button>`).join("");

// worksheet
document.getElementById("cols").innerHTML = `<tr class="h-[9px]"><th class="w-[9px] border-r border-[#9eb6ce] bg-[#a9c4e9]"></th>` +
  [..."ABCDEFGHIJKLMNO"].map(c => `<th class="w-[6.4%] border-r border-b border-[#9eb6ce] font-normal">${c}</th>`).join("") + `<th class="border-b border-[#9eb6ce]"></th></tr>`;

const h4 = "h-[28px]", h3 = "h-[21px]", h2 = "h-[14px]", h1 = "h-[9px]";
const rows = [
  [18, h4, "121", "Close to\nPublic\nTransportat\nion", "close\npublic\ntransporta\ntion", "bus stop", "metro\naccess", "subway", "light rail", "bart", "metro", "marc", "caltran", "WMATA", "walking\ndistance\nto transit", "bus line", "near\npublic\ntransit", "acce\ntran"],
  [19, h3, "123", "Close to\nSchools", "close\nschools", "walking\ndistance\nto schools", "near\nschools"],
  [20, h3, "124", "Close to\nShops", "close\nshops", "mall", "retail", "", "bowling", "restaurant\ns", "mall", "shopping\ncenter", "walking\ndistance\nto shops", "near\nshops", "access to\nshops", "seconds to\nshops", "minutes to\nshops"],
  [21, "h-[15px]", "17", "Clubhouse", "clubhouse", "club\nhouse", "club room", "clubroom", "resident\nclubhouse"],
  [22, h3, "18", "Clubhouse/\nParty Room", "clubhouse\nparty room", "party room", "community\nroom", "multi-\npurpose\nroom", "multipurp\nose room", "social\nroom"],
  [23, h1, "21", "Concierge", "concierge"],
  [24, h1, "25", "Corner Lot", "corner lot"],
  [25, h4, "110", "Corporate\nSuites", "corporate\nsuites", "corporate\napartment\ns", "corporate\nfinished\nguest\nsuites", "corporate\nleases", "corporate\nrentals", "short term\ncorporate\nhousing", "short term\n/\ncorporate\napts", "short\nterm/corp\norate"],
  [26, h2, "111", "Courtesy\nPatrol", "courtesy\npatrol", "patrol\nservice", "courtesy\nofficer", "patrol\nofficer", "night\npatrol"],
  [27, h1, "26", "Courtyard", "courtyard", "courtyards"],
  [28, h2, "166", "Crown\nMolding", "crown\nmolding", "decorative\nmolding"],
  [29, h1, "27", "Day Care", "day care", "daycare", "childcare", "child care"],
  [30, h2, "29", "Dishwasher", "dishwash\ner", "dish\nwasher"],
  [31, "h-[15px]", "30", "Disposal", "disposal", "garbage\ndisposal", "disposals", "garbage\ndisposals"],
  [32, h2, "125", "Disposal\nChutes", "disposal\nchutes", "garbage\ndisposal", "trash\nchutes"]
];
document.getElementById("rows").innerHTML = rows.map(([n, h, ...cells]) => {
  while (cells.length < 16) cells.push("");
  return `<tr class="${h}"><th class="bg-[#dde6f1] align-bottom font-normal text-[#4c6283] shadow-[inset_-1px_-1px_0_#9eb6ce]">${n}</th>` + cells.map((c, i) =>
    `<td class="whitespace-pre shadow-[inset_-1px_-1px_0_#d5dce6] ${i === 0 ? "text-center" : i === 1 ? "bg-[#92d050] pl-px font-['Lato'] font-bold text-[#16300a]" : "pl-px"}">${c}</td>`).join("") + `</tr>`;
}).join("");
</script>
</body>
</html>
